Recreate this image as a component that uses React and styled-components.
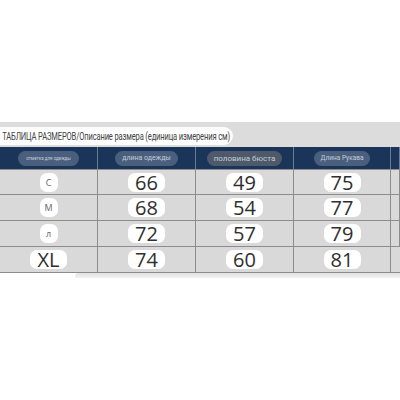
import styled, { createGlobalStyle } from "styled-components";

const GlobalStyle = createGlobalStyle`
  html, body {
    margin: 0;
    padding: 0;
    background: #ffffff;
    font-family: "Open Sans", "Liberation Sans", sans-serif;
  }
`;

const columns = ["отметка для одежды", "длина одежды", "половина бюста", "Длина Рукава"];

const rows = [
  { size: "С", small: true, values: ["66", "49", "75"] },
  { size: "М", small: true, values: ["68", "54", "77"] },
  { size: "л", small: true, values: ["72", "57", "79"] },
  { size: "XL", small: false, values: ["74", "60", "81"] },
];

const Page = styled.div`
  width: 400px;
  height: 400px;
  overflow: hidden;
  padding-top: 122px;
  box-sizing: border-box;
`;

const Panel = styled.div`
  background: #dcdcdc;
`;

const TitleBar = styled.div`
  height: 25px;
  padding-top: 5px;
  box-sizing: border-box;
`;

const TitlePill = styled.div`
  width: 233px;
  height: 18px;
  background: #fdfdfd;
  border-radius: 0 9px 9px 0;
  overflow: hidden;
  display: flex;
  align-items: center;
`;

const TitleText = styled.span`
  display: inline-block;
  padding-left: 3px;
  font-family: Roboto, "Liberation Sans", sans-serif;
  font-size: 10.5px;
  letter-spacing: -0.2px;
  color: #444;
  white-space: nowrap;
  transform: scaleX(0.72);
  transform-origin: left center;
`;

const Grid = styled.div`
  display: grid;
  grid-template-columns: 98px 98px 98px 97px 1fr;
  border-bottom: 1px solid #8c8c8c;
`;

const HeadCell = styled.div`
  height: 22px;
  background: #1b3459;
  border-right: 1px solid #6a7a90;
  display: flex;
  align-items: center;
  justify-content: center;
  &:last-child {
    border-right: none;
  }
`;

const HeadChip = styled.div`
  height: 15px;
  padding: 0 ${(p) => p.$pad}px;
  border-radius: 8px;
  background: ${(p) => (p.$dark ? "#4e5a6a" : "#4a5f7e")};
  color: #c3ccd8;
  font-family: Roboto, "Liberation Sans", sans-serif;
  font-size: ${(p) => p.$size}px;
  display: flex;
  align-items: center;
  white-space: nowrap;
`;

const Cell = styled.div`
  height: ${(p) => p.$h}px;
  box-sizing: border-box;
  border-right: 1px solid #8c8c8c;
  border-top: 1px solid #8c8c8c;
  display: flex;
  align-items: center;
  justify-content: center;
  background: #d9d9d9;
  &:last-child {
    border-right: none;
  }
`;

const ValuePill = styled.div`
  height: 19px;
  min-width: ${(p) => (p.$small ? 18 : 37)}px;
  padding: 0 ${(p) => (p.$small ? 4 : 5)}px;
  box-sizing: border-box;
  border-radius: 7px;
  background: #ffffff;
  display: flex;
  align-items: center;
  justify-content: center;
  font-size: ${(p) => (p.$small ? 9 : 20)}px;
  font-weight: 500;
  color: ${(p) => (p.$small ? "#666" : "#2f2f2f")};
`;

const Shade = styled.div`
  height: 5px;
  margin-left: 75px;
  background: linear-gradient(#e2e2e2, #f2f2f2);
  border-top-left-radius: 4px;
`;

const headerChips = [
  { pad: 8, size: 4.5, dark: false },
  { pad: 7, size: 7, dark: false },
  { pad: 7, size: 8, dark: true },
  { pad: 7, size: 6.5, dark: false },
];

export default function App() {
  const heights = [25, 26, 26, 26];
  return (
    <Page>
      <GlobalStyle />
      <Panel>
        <TitleBar>
          <TitlePill>
            <TitleText>ТАБЛИЦА РАЗМЕРОВ/Описание размера (единица измерения см)</TitleText>
          </TitlePill>
        </TitleBar>
        <Grid>
          {columns.map((c, i) => (
            <HeadCell key={c}>
              <HeadChip $pad={headerChips[i].pad} $size={headerChips[i].size} $dark={headerChips[i].dark}>
                {c}
              </HeadChip>
            </HeadCell>
          ))}
          <HeadCell />
          {rows.map((r, ri) => (
            <>
              <Cell key={r.size} $h={heights[ri]}>
                <ValuePill $small={r.small}>{r.size}</ValuePill>
              </Cell>
              {r.values.map((v, vi) => (
                <Cell key={r.size + vi} $h={heights[ri]}>
                  <ValuePill>{v}</ValuePill>
                </Cell>
              ))}
              <Cell key={r.size + "e"} $h={heights[ri]} />
            </>
          ))}
        </Grid>
      </Panel>
      <Shade />
    </Page>
  );
}
